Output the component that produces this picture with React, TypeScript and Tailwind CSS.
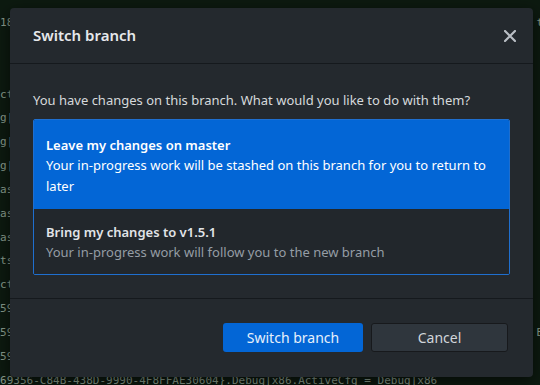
import React from "react";

// [hidden left part, chars peeking out at the left edge, part under the dialog, chars peeking out at the right edge]
const rows: [string, string, string, string][] = [
  ["{2150E333-8FDC-42A3-94", "18", "-6B2F4C1D7E}\") = \"Solution Items\", \"Solution Items\", \"{1B7E5D06-0D1A-4C1D", "t"],
  ["", "", "", ""],
  ["", "", "", ""],
  ["\t\tRelease|x86 = Rel", "ct", "ive|x86", ""],
  ["\t{A1C2E3F4-5B6C-4D7E-Debu", "g|", "x86.ActiveCfg = Debug|x86", ""],
  ["\t{A1C2E3F4-5B6C-4D7E-Debu", "g|", "x86.Build.0 = Debug|x86", ""],
  ["\t{A1C2E3F4-5B6C-4D7E-Debu", "g|", "x86.Deploy.0 = Debug|x86", ""],
  ["\t{B7E92A10-3C4D-4F5E-9A8B-Rele", "as", "e|x86.ActiveCfg = Release|x86", ""],
  ["\t{B7E92A10-3C4D-4F5E-9A8B-Rele", "as", "e|x86.Build.0 = Release|x86", ""],
  ["\t{B7E92A10-3C4D-4F5E-9A8B-Rele", "as", "e|x86.Deploy.0 = Release|x86", ""],
  ["\tGlobalSection(ProjectConfigura", "ts", "Platforms) = postSolution", ""],
  ["\t{C3D4E5F6-A7B8-4C9D-8E0F-Produ", "ct", "ion|x86", ""],
  ["\t{E4F69356-C84B-438D-9990-4F8FF", "59", "356-C84B}.Debug|x86", ""],
  ["\t{E4F69356-C84B-438D-9990-4F8FF", "59", "356-C84B}.Release|x86.Build.0 = Release|x86 ---- Release|x86 ", "B"],
  ["\t{E4F69356-C84B-438D-9990-4F8FF", "59", "356-C84B}.Release|x86.Deploy.0", ""],
  ["\t{E4F", "69", "356-C84B-438D-9990-4F8FFAE30604}.Debug|x86.ActiveCfg = Debug|x86", ""],
];

const LEFT_COLS = 22;
const MID_COLS = 79;

function Terminal() {
  return (
    <div
      className="absolute top-[11px] left-[-145.6px] text-[11px] leading-[23.85px] text-[#8a9c8d] whitespace-pre"
      style={{ fontFamily: '"DejaVu Sans Mono", monospace' }}
    >
      {rows.map(([hidden, peek, mid, right], i) => (
        <div key={i} className="h-[23.85px]">
          {hidden.replace(/\t/g, "  ").slice(-LEFT_COLS).padStart(LEFT_COLS, " ")}
          {peek}
          {right ? mid.slice(0, MID_COLS).padEnd(MID_COLS, " ") + right : mid}
        </div>
      ))}
    </div>
  );
}

function CloseIcon() {
  return (
    <svg width="12" height="12" viewBox="0 0 12 12" className="text-[#b9bec4]">
      <path d="M1 1 L11 11 M11 1 L1 11" stroke="currentColor" strokeWidth="2.2" strokeLinecap="round" />
    </svg>
  );
}

export default function App() {
  return (
    <div
      className="relative w-[540px] h-[385px] overflow-hidden bg-[#0d1a10]"
      style={{ fontFamily: '"Noto Sans", "Open Sans", sans-serif' }}
    >
      <Terminal />
      <div className="absolute left-[10px] top-[8px] w-[523px] h-[369px] bg-[#24292e] rounded-[4px] shadow-[0_4px_16px_rgba(0,0,0,0.6)] flex flex-col">
        <div className="h-[56px] flex items-center justify-between pl-[23px] pr-[17px] border-b border-[#15191d]">
          <h1 className="text-[15px] font-semibold text-[#e6e8eb]">Switch branch</h1>
          <CloseIcon />
        </div>
        <div className="px-[23px] pt-[26px] pb-[23px] border-b border-[#15191d]">
          <p className="text-[13px] leading-[20px] text-[#d6d9dc] mb-[9px]">
            You have changes on this branch. What would you like to do with them?
          </p>
          <div className="w-[477px] border border-[#1f6fcf] rounded-[2px] overflow-hidden">
            <div className="bg-[#0366d6] px-[12px] pt-[15px] pb-[12px]">
              <div className="text-[13px] leading-[20px] font-semibold text-white">Leave my changes on master</div>
              <div className="text-[13px] leading-[21px] text-white">
                Your in-progress work will be stashed on this branch for you to return to later
              </div>
            </div>
            <div className="bg-[#22272c] px-[12px] pt-[13px] pb-[11px]">
              <div className="text-[13px] leading-[20px] font-semibold text-[#e1e4e8]">Bring my changes to v1.5.1</div>
              <div className="text-[13px] leading-[21px] text-[#959da5]">
                Your in-progress work will follow you to the new branch
              </div>
            </div>
          </div>
        </div>
        <div className="flex justify-end gap-[8px] pt-[24px] pr-[25px]">
          <button className="w-[140px] h-[29px] bg-[#0366d6] text-[#e6f0fb] text-[14px] rounded-[3px]">
            Switch branch
          </button>
          <button className="w-[137px] h-[29px] bg-[#2f363d] border border-[#17191c] text-[#d1d5da] text-[14px] rounded-[3px]">
            Cancel
          </button>
        </div>
      </div>
    </div>
  );
}
